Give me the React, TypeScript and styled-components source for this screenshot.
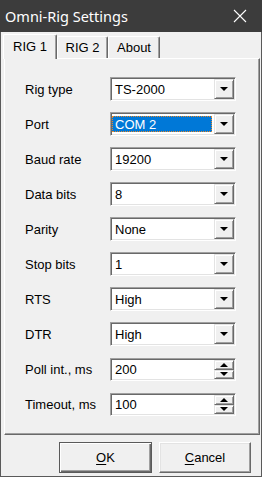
import styled, { createGlobalStyle } from "styled-components";

const GlobalStyle = createGlobalStyle`
  html, body {
    margin: 0;
    padding: 0;
    background: #f0f0f0;
  }
  * {
    box-sizing: border-box;
  }
`;

//#region Styling
const Window = styled.div`
  width: 262px;
  height: 477px;
  display: flex;
  flex-direction: column;
  background: #f0f0f0;
  border: 1px solid #5a5a5a;
  border-top: none;
  font-family: "Liberation Sans", Arial, sans-serif;
  font-size: 13px;
  color: #000;
`;

const TitleBar = styled.div`
  height: 32px;
  margin: 0 -1px;
  display: flex;
  align-items: center;
  justify-content: space-between;
  padding: 0 15px 0 5px;
  background: #3c3c3c;
  color: #fff;
  font-family: "Noto Sans", "Open Sans", sans-serif;
  font-size: 14.5px;
`;

const Body = styled.div`
  flex: 1;
  display: flex;
  flex-direction: column;
  padding: 2px 1px 0 2px;
`;

const TabStrip = styled.div`
  display: flex;
  align-items: flex-end;
  height: 24px;
  position: relative;
  z-index: 1;
`;

const Tab = styled.div<{ $active?: boolean; $w: number }>`
  width: ${(p) => p.$w}px;
  height: ${(p) => (p.$active ? 25 : 22)}px;
  margin-bottom: ${(p) => (p.$active ? -1 : 0)}px;
  display: flex;
  align-items: ${(p) => (p.$active ? "flex-start" : "center")};
  justify-content: center;
  padding-top: ${(p) => (p.$active ? 4 : 0)}px;
  background: #f0f0f0;
  border-top: 1px solid #fff;
  border-left: 1px solid #fff;
  border-right: 1px solid #696969;
  box-shadow: inset -1px 0 0 #a0a0a0;
  border-radius: 2px 2px 0 0;
`;

const Panel = styled.div`
  height: 377px;
  width: 256px;
  margin-left: 1px;
  display: flex;
  flex-direction: column;
  gap: 11px;
  padding: 18px 0 0 20px;
  border-top: 1px solid #fff;
  border-left: 1px solid #fff;
  border-right: 1px solid #696969;
  border-bottom: 1px solid #696969;
  box-shadow: inset -1px -1px 0 #a0a0a0;
`;

const Row = styled.div<{ $shift?: number }>`
  display: flex;
  align-items: center;
  margin-top: ${(p) => p.$shift || 0}px;
`;

const Label = styled.div`
  width: 85px;
`;

const Field = styled.div<{ $spin?: boolean }>`
  width: 126px;
  height: ${(p) => (p.$spin ? 23 : 24)}px;
  display: flex;
  align-items: stretch;
  padding: 1px;
  background: #fff;
  border-style: solid;
  border-width: 1px;
  border-color: #a0a0a0 #fff #fff #a0a0a0;
  box-shadow: inset 1px 1px 0 #696969, inset -1px -1px 0 #e3e3e3;
`;

const Value = styled.div<{ $selected?: boolean }>`
  flex: 1;
  display: flex;
  align-items: center;
  margin: 2px 2px 2px 0;
  padding-left: ${(p) => (p.$selected ? 2 : 2)}px;
  background: ${(p) => (p.$selected ? "#0078d7" : "transparent")};
  color: ${(p) => (p.$selected ? "#fff" : "#000")};
  border: 1px ${(p) => (p.$selected ? "dotted #e8892a" : "solid transparent")};
`;

const DropButton = styled.div`
  width: 20px;
  display: flex;
  align-items: center;
  justify-content: center;
  background: #f0f0f0;
  border: 1px solid;
  border-color: #e3e3e3 #696969 #696969 #e3e3e3;
  box-shadow: inset 1px 1px 0 #fff, inset -1px -1px 0 #a0a0a0;
`;

const SpinBox = styled.div`
  width: 20px;
  display: flex;
  flex-direction: column;
`;

const SpinHalf = styled(DropButton)`
  flex: 1;
  width: 100%;
`;

const Arrow = styled.div<{ $up?: boolean }>`
  width: 0;
  height: 0;
  border-left: 4px solid transparent;
  border-right: 4px solid transparent;
  ${(p) => (p.$up ? "border-bottom" : "border-top")}: 4px solid #000;
`;

const Footer = styled.div`
  display: flex;
  justify-content: flex-end;
  gap: 7px;
  padding: 7px 9px 0 0;
`;

const Button = styled.div<{ $default?: boolean; $w: number }>`
  width: ${(p) => p.$w}px;
  height: 31px;
  display: flex;
  align-items: center;
  justify-content: center;
  background: #f0f0f0;
  border: 1px solid;
  border-color: ${(p) =>
    p.$default ? "#5a5a5a" : "#fff #696969 #696969 #fff"};
  box-shadow: ${(p) =>
    p.$default
      ? "inset 1px 1px 0 #fff, inset -1px -1px 0 #696969, inset -2px -2px 0 #a0a0a0"
      : "inset -1px -1px 0 #a0a0a0, inset 1px 1px 0 #e3e3e3"};
  u {
    text-decoration-thickness: 1px;
    text-underline-offset: 2px;
  }
`;

function CloseIcon() {
  return (
    <svg width="14" height="14" viewBox="0 0 14 14">
      <path d="M1 1L13 13M13 1L1 13" stroke="#fff" strokeWidth="1.1" />
    </svg>
  );
}

function Combo({ value, selected }: { value: string; selected?: boolean }) {
  return (
    <Field>
      <Value $selected={selected}>{value}</Value>
      <DropButton>
        <Arrow />
      </DropButton>
    </Field>
  );
}

function Spin({ value }: { value: string }) {
  return (
    <Field $spin>
      <Value>{value}</Value>
      <SpinBox>
        <SpinHalf>
          <Arrow $up />
        </SpinHalf>
        <SpinHalf>
          <Arrow />
        </SpinHalf>
      </SpinBox>
    </Field>
  );
}

const combos = [
  { label: "Rig type", value: "TS-2000" },
  { label: "Port", value: "COM 2", selected: true },
  { label: "Baud rate", value: "19200" },
  { label: "Data bits", value: "8" },
  { label: "Parity", value: "None" },
  { label: "Stop bits", value: "1" },
  { label: "RTS", value: "High" },
  { label: "DTR", value: "High" },
];

export default function App() {
  return (
    <>
      <GlobalStyle />
      <Window>
        <TitleBar>
          <span>Omni-Rig Settings</span>
          <CloseIcon />
        </TitleBar>
        <Body>
          <TabStrip>
            <Tab $active $w={54}>RIG 1</Tab>
            <Tab $w={51}>RIG 2</Tab>
            <Tab $w={52}>About</Tab>
          </TabStrip>
          <Panel>
            {combos.map((c) => (
              <Row key={c.label}>
                <Label>{c.label}</Label>
                <Combo value={c.value} selected={c.selected} />
              </Row>
            ))}
            <Row $shift={1}>
              <Label>Poll int., ms</Label>
              <Spin value="200" />
            </Row>
            <Row $shift={1}>
              <Label>Timeout, ms</Label>
              <Spin value="100" />
            </Row>
          </Panel>
          <Footer>
            <Button $default $w={93}>
              <span><u>O</u>K</span>
            </Button>
            <Button $w={92}>
              <span><u>C</u>ancel</span>
            </Button>
          </Footer>
        </Body>
      </Window>
    </>
  );
}
